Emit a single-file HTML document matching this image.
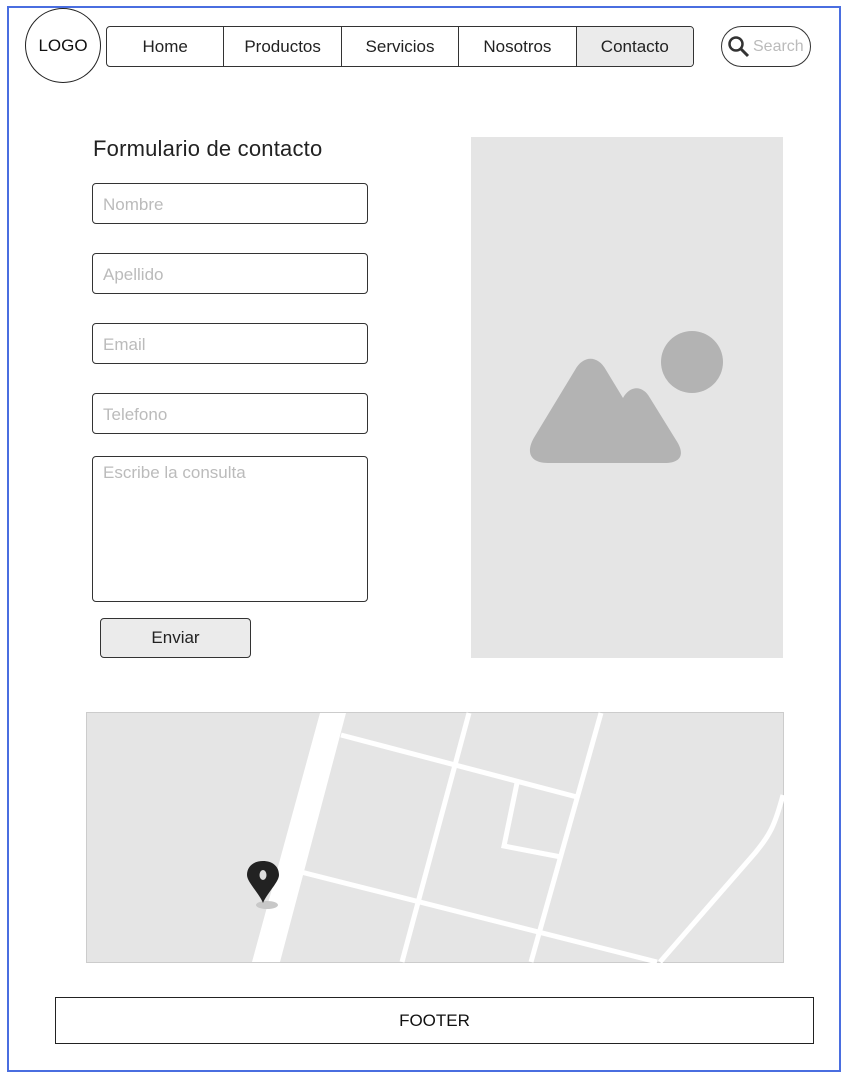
<!DOCTYPE html>
<html><head><meta charset="utf-8"><style>
*{box-sizing:border-box;margin:0;padding:0}
body{width:848px;height:1080px;background:#fff;font-family:"Liberation Sans",sans-serif;position:relative;overflow:hidden}
.a{position:absolute}
.frame{left:7px;top:6px;width:834px;height:1066px;border:2px solid #4a6ee0}
.logo{left:25px;top:8px;width:76px;height:75px;border:1px solid #222;border-radius:50%;display:flex;align-items:center;justify-content:center;font-size:17px;color:#111}
.nav{left:106px;top:26px;width:588px;height:41px;border:1px solid #333;border-radius:4px;display:flex;overflow:hidden}
.nav div{flex:1;border-right:1px solid #333;display:flex;align-items:center;justify-content:center;font-size:17px;color:#222}
.nav div:last-child{border-right:none;background:#ebebeb}
.search{left:721px;top:26px;width:90px;height:41px;border:1px solid #333;border-radius:21px;font-size:16px;color:#bbb;padding-left:31px;line-height:39px;overflow:hidden}
h1{left:93px;top:136px;font-size:22px;font-weight:normal;color:#222;letter-spacing:0.2px}
.in{left:92px;width:276px;height:41px;border:1px solid #333;border-radius:4px;font-size:17px;color:#bbb;padding:11px 10px}
.btn{left:100px;top:618px;width:151px;height:40px;border:1px solid #333;border-radius:4px;background:#ebebeb;font-size:17px;color:#222;display:flex;align-items:center;justify-content:center}
.img{left:471px;top:137px;width:312px;height:521px;background:#e5e5e5}
.footer{left:55px;top:997px;width:759px;height:47px;border:1px solid #222;display:flex;align-items:center;justify-content:center;font-size:17px;color:#111}
</style></head><body>
<div class="a frame"></div>
<div class="a logo">LOGO</div>
<div class="a nav"><div>Home</div><div>Productos</div><div>Servicios</div><div>Nosotros</div><div>Contacto</div></div>
<div class="a search">Search</div>
<svg class="a" style="left:727px;top:35px" width="24" height="24" viewBox="0 0 24 24"><circle cx="9" cy="9" r="6.5" fill="none" stroke="#333" stroke-width="2.5"/><line x1="13.5" y1="13.5" x2="21" y2="21" stroke="#333" stroke-width="3"/></svg>
<h1 class="a">Formulario de contacto</h1>
<div class="a in" style="top:183px">Nombre</div>
<div class="a in" style="top:253px">Apellido</div>
<div class="a in" style="top:323px">Email</div>
<div class="a in" style="top:393px">Telefono</div>
<div class="a in" style="top:456px;height:146px;padding-top:6px">Escribe la consulta</div>
<div class="a btn">Enviar</div>
<div class="a img"></div>
<svg class="a" style="left:0;top:0" width="848" height="1080">
<circle cx="692" cy="362" r="31" fill="#b3b3b3"/>
<path d="M548,463 C530,463 525,452 535,436 L575,370 C583,355 598,355 606,370 L623,398 C630,385 643,385 650,398 L676,440 C686,455 680,463 665,463 Z" fill="#b3b3b3"/>
<rect x="86.5" y="712.5" width="697" height="250" fill="#e5e5e5" stroke="#ccc"/>
<g stroke="#fff" stroke-width="5" fill="none">
<line x1="341" y1="735" x2="577" y2="797"/>
<line x1="469" y1="713" x2="402" y2="962"/>
<line x1="601" y1="713" x2="531" y2="962"/>
<line x1="301" y1="872" x2="657" y2="962"/>
<polyline points="517,783 504,846 561,857"/>
<path d="M783,795 C775,825 770,835 755,853 L660,962"/>
</g>
<polygon points="320,713 346,713 280,962 252,962" fill="#fff"/>
<ellipse cx="267" cy="905" rx="11" ry="4" fill="#c8c8c8"/>
<path d="M263,903 L250,878 C246,870 247,862 252,867 C249,858 256,862 263,862 C256,862 247,866 248,875 Z" fill="none"/>
<path d="M263,903 C259,893 247,882 247,875 C247,866 254,861 263,861 C272,861 279,866 279,875 C279,882 267,893 263,903 Z" fill="#222"/>
<ellipse cx="263" cy="875" rx="3.5" ry="5" fill="#ddd"/>
</svg>
<div class="a footer">FOOTER</div>
</body></html>
